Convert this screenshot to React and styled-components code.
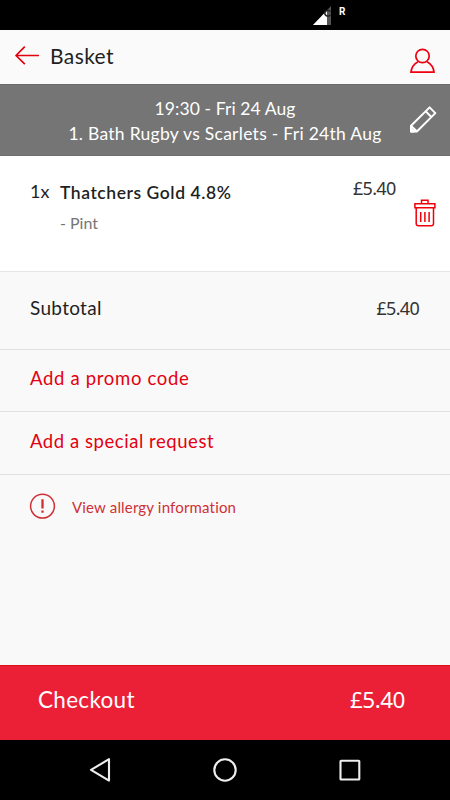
import React from "react";
import styled, { createGlobalStyle } from "styled-components";

const GlobalStyle = createGlobalStyle`
  *, *::before, *::after { box-sizing: border-box; }
  html, body { margin: 0; background: #000; }
  body { font-family: Lato, "Open Sans", sans-serif; }
  button { font: inherit; color: inherit; background: none; border: 0; padding: 0; margin: 0; }
  svg { display: block; flex: none; }
`;

const Screen = styled.div`
  width: 450px;
  height: 800px;
  display: flex;
  flex-direction: column;
  overflow: hidden;
  background: #f9f9f9;
`;

const StatusBar = styled.div`
  flex: none;
  height: 30px;
  padding: 6px 0 0 312px;
  display: flex;
  gap: 7px;
  background: #000;
  color: #fff;
`;

const Roaming = styled.span`
  font: 700 10px/12px Roboto, sans-serif;
`;

const Header = styled.header`
  flex: none;
  height: 54px;
  padding: 0 14px 2px;
  display: flex;
  align-items: center;
  background: #fafafa;
`;

const Text = styled.span`
  font-size: ${(p) => p.$size}px;
  line-height: 24px;
  font-weight: ${(p) => p.$weight || 400};
  letter-spacing: ${(p) => p.$track || 0}px;
  color: ${(p) => p.$color || "#1f1f1f"};
  white-space: nowrap;
`;

const Price = styled(Text)`
  font-family: "Noto Sans", sans-serif;
`;

const Title = styled.h1`
  margin: 0 auto 0 10px;
  display: flex;
  font-weight: 400;
`;

const ProfileButton = styled.button`
  padding-top: 9px;
`;

const Slot = styled.section`
  flex: none;
  height: 72px;
  padding: 0 13px 0 68px;
  display: flex;
  align-items: center;
  justify-content: space-between;
  background: #757575;
  border-top: 1px solid #6b6b6b;
  border-bottom: 1px solid #6f6f6f;
`;

const SlotText = styled.div`
  width: 314px;
  padding-top: 3px;
  display: flex;
  flex-direction: column;
  align-items: center;
  gap: 1px;
`;

const Item = styled.section`
  flex: none;
  height: 116px;
  padding: 23px 14px 0 30px;
  display: flex;
  align-items: flex-start;
  background: #fff;
  border-bottom: 1px solid #e6e6e6;
`;

const Quantity = styled.div`
  width: 30px;
  display: flex;
`;

const ItemInfo = styled.div`
  flex: 1;
  padding-top: 2px;
  display: flex;
  flex-direction: column;
  gap: 6px;
`;

const ItemPrice = styled.div`
  width: 45px;
  margin-top: -3px;
  margin-right: 16px;
  display: flex;
`;

const DeleteButton = styled.button`
  margin-top: 20px;
`;

const Row = styled.div`
  flex: none;
  height: ${(p) => p.$height}px;
  padding: 0 31px ${(p) => p.$lift || 0}px 30px;
  display: flex;
  align-items: center;
  justify-content: space-between;
  border-bottom: 1px solid #e1e1e1;
`;

const Allergy = styled.div`
  flex: 1;
  padding: 17px 29px;
  display: flex;
  align-items: flex-start;
  gap: 16px;
`;

const AllergyLabel = styled.div`
  padding-top: 3px;
  display: flex;
`;

const Checkout = styled.button`
  && {
    flex: none;
    height: 75px;
    padding: 0 45px 6px 38px;
    display: flex;
    align-items: center;
    justify-content: space-between;
    background: #eb1f36;
    border-top: 1px solid #dc1016;
  }
`;

const NavBar = styled.nav`
  flex: none;
  height: 60px;
  padding: 0 85px;
  display: flex;
  align-items: center;
  justify-content: space-between;
  background: #000;
`;

const RED = "#e3000f";

const SignalIcon = () => (
  <svg width="20" height="20" viewBox="0 0 20 20">
    <path d="M1 19 19 0V19Z" fill="#555" />
    <path d="M1 19 15 4.5V19Z" fill="#fff" />
    <path d="M18.5 5.5a3.2 2.8 0 1 0 0 3.5" fill="none" stroke="#222" strokeWidth="1.6" />
  </svg>
);

const BackIcon = () => (
  <svg width="26" height="20" viewBox="0 0 26 20" fill="none" stroke={RED} strokeWidth="1.7" strokeLinecap="round" strokeLinejoin="round">
    <path d="M24.3 9.5H2M10.3 1.2 2 9.5l8.3 8.2" />
  </svg>
);

const ProfileIcon = () => (
  <svg width="26" height="26" viewBox="0 0 26 26" fill="none" stroke="#ee0010" strokeWidth="1.7">
    <circle cx="12.5" cy="8" r="6.7" />
    <path d="M8 13.8C4 16 1.5 19.5 1 24.1H24C23.5 19.5 21 16 17 13.8" />
  </svg>
);

const PencilIcon = () => (
  <svg width="28" height="28" viewBox="0 0 28 28" fill="none" stroke="#fff" strokeWidth="2" strokeLinejoin="round">
    <path d="M2 25.5V19.8L20.6 1.4 26.3 7.1 7.9 25.5ZM2 19.8 7.9 25.5M16.6 5.3 22.4 11" />
    <path d="M2 25.5V22.5L5 25.5Z" fill="#fff" />
  </svg>
);

const TrashIcon = () => (
  <svg width="22" height="28" viewBox="0 0 22 28" fill="none" stroke="#f00008" strokeWidth="1.5">
    <path d="M7.5 4.5V1.3H14V4.5M.9 4.8H20.9V8.8H.9ZM2.2 8.8V24.5Q2.2 26.8 4.5 26.8H17.2Q19.5 26.8 19.5 24.5V8.8M6.7 13V23M10.9 13V23M15.1 13V23" />
  </svg>
);

const AlertIcon = () => (
  <svg width="27" height="27" viewBox="0 0 27 27" fill="none" stroke="#cf3035">
    <circle cx="13.5" cy="14.2" r="11.9" strokeWidth="1.5" />
    <path d="M13.5 7.2V16.6M13.5 18.6V20.8" strokeWidth="2.3" />
  </svg>
);

const NavBackIcon = () => (
  <svg width="29" height="28" viewBox="0 0 29 28" fill="none" stroke="#eee" strokeWidth="2.1" strokeLinejoin="round">
    <path d="M24 3.2V24.6L6 13.9Z" />
  </svg>
);

const NavHomeIcon = () => (
  <svg width="28" height="28" viewBox="0 0 28 28">
    <circle cx="14" cy="14" r="10.7" fill="none" stroke="#eee" strokeWidth="2.1" />
  </svg>
);

const NavRecentIcon = () => (
  <svg width="29" height="28" viewBox="0 0 29 28">
    <rect x="4.5" y="4.7" width="18.8" height="18.8" rx=".6" fill="none" stroke="#eee" strokeWidth="2.1" />
  </svg>
);

export default function App() {
  return (
    <>
      <GlobalStyle />
      <Screen>
        <StatusBar>
          <SignalIcon />
          <Roaming>R</Roaming>
        </StatusBar>
        <Header>
          <BackIcon />
          <Title>
            <Text $size={21} $track={0.4}>Basket</Text>
          </Title>
          <ProfileButton aria-label="Profile">
            <ProfileIcon />
          </ProfileButton>
        </Header>
        <Slot>
          <SlotText>
            <Text $size={17.5} $track={0.1} $color="#fff">19:30 - Fri 24 Aug</Text>
            <Text $size={17.5} $track={0.28} $color="#fff">1. Bath Rugby vs Scarlets - Fri 24th Aug</Text>
          </SlotText>
          <PencilIcon />
        </Slot>
        <Item>
          <Quantity>
            <Text $size={18}>1x</Text>
          </Quantity>
          <ItemInfo>
            <Text $size={17.5} $weight={600} $track={0.56}>Thatchers Gold 4.8%</Text>
            <Text $size={16} $color="#757575">- Pint</Text>
          </ItemInfo>
          <ItemPrice>
            <Price $size={18} $track={-0.7} $color="#333">£5.40</Price>
          </ItemPrice>
          <DeleteButton aria-label="Remove item">
            <TrashIcon />
          </DeleteButton>
        </Item>
        <Row $height={78} $lift={5}>
          <Text $size={19} $track={0.3}>Subtotal</Text>
          <Price $size={18} $track={-0.7} $color="#333">£5.40</Price>
        </Row>
        <Row $height={62} $lift={5}>
          <Text $size={18.5} $track={0.68} $color={RED}>Add a promo code</Text>
        </Row>
        <Row $height={63} $lift={5}>
          <Text $size={18.5} $track={0.55} $color={RED}>Add a special request</Text>
        </Row>
        <Allergy>
          <AlertIcon />
          <AllergyLabel>
            <Text $size={15} $track={0.17} $color="#cf3035">View allergy information</Text>
          </AllergyLabel>
        </Allergy>
        <Checkout>
          <Text $size={22.5} $track={0.3} $color="#fff">Checkout</Text>
          <Price $size={22.5} $track={-0.5} $color="#fff">£5.40</Price>
        </Checkout>
        <NavBar>
          <NavBackIcon />
          <NavHomeIcon />
          <NavRecentIcon />
        </NavBar>
      </Screen>
    </>
  );
}
